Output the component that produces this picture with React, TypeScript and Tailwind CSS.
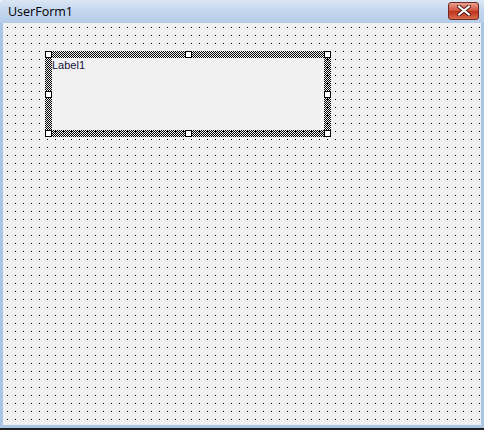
import React from "react";

const Handle: React.FC = () => (
    <div className="w-[7px] h-[7px] bg-white border border-black shrink-0" />
);

const hatch =
    "bg-[image:conic-gradient(#000_25%,transparent_0_50%,#000_0_75%,transparent_0)] bg-[length:2px_2px]";

export default function App() {
    return (
        <div className="w-[486px] h-[432px] bg-white overflow-hidden">
            <div className="w-[484px] h-[430px] flex flex-col border-b-2 border-[#1e1e1e]">
                {/* title bar */}
                <div className="h-[23px] shrink-0 flex items-center justify-between pl-[8px] pr-[5px] bg-[linear-gradient(#dbe6f4,#c4d7ee_45%,#b5cce8)] rounded-tl-[3px]">
                    <span className="text-[12.5px] text-black leading-none pt-[1px]" style={{ fontFamily: '"Open Sans", "Noto Sans", sans-serif' }}>
                        UserForm1
                    </span>
                    <div className="w-[31px] h-[18px] mt-[-2px] rounded-[3px] border border-[#6b2a22] bg-[linear-gradient(#e8a093,#d2513c_48%,#c0321c_52%,#d66a4d)] flex items-center justify-center">
                        <svg width="14" height="11" viewBox="0 0 14 11">
                            <path d="M2 1.5 L12 9.5 M12 1.5 L2 9.5" stroke="#4a1a14" strokeWidth="4" strokeLinecap="round" />
                            <path d="M2 1.5 L12 9.5 M12 1.5 L2 9.5" stroke="#ffffff" strokeWidth="2.2" strokeLinecap="round" />
                        </svg>
                    </div>
                </div>
                {/* form body */}
                <div className="flex-1 border-l-[3px] border-r-[3px] border-b-[3px] border-l-[#a9c4e4] border-r-[#a9c4e4] border-b-[#a9c4e4] bg-[#f0f0f0] bg-[image:conic-gradient(at_1px_1px,transparent_75%,#000_0)] bg-[length:8px_8px] bg-[position:4px_4px] pt-[28px] pl-[42px]">
                    {/* selected label */}
                    <div className="w-[286px] h-[86px] flex flex-col">
                        <div className="flex h-[7px]">
                            <Handle />
                            <div className={`flex-1 ${hatch}`} />
                            <Handle />
                            <div className={`flex-1 ${hatch}`} />
                            <Handle />
                        </div>
                        <div className="flex flex-1">
                            <div className="w-[7px] flex flex-col">
                                <div className={`flex-1 ${hatch}`} />
                                <Handle />
                                <div className={`flex-1 ${hatch}`} />
                            </div>
                            <div className="flex-1 bg-[#f0f0f0] pt-[2px] text-[11px] leading-none text-[#14143c]" style={{ fontFamily: '"Liberation Sans", Arial, sans-serif' }}>
                                Label1
                            </div>
                            <div className="w-[7px] flex flex-col">
                                <div className={`flex-1 ${hatch}`} />
                                <Handle />
                                <div className={`flex-1 ${hatch}`} />
                            </div>
                        </div>
                        <div className="flex h-[7px]">
                            <Handle />
                            <div className={`flex-1 ${hatch}`} />
                            <Handle />
                            <div className={`flex-1 ${hatch}`} />
                            <Handle />
                        </div>
                    </div>
                </div>
            </div>
        </div>
    );
}
